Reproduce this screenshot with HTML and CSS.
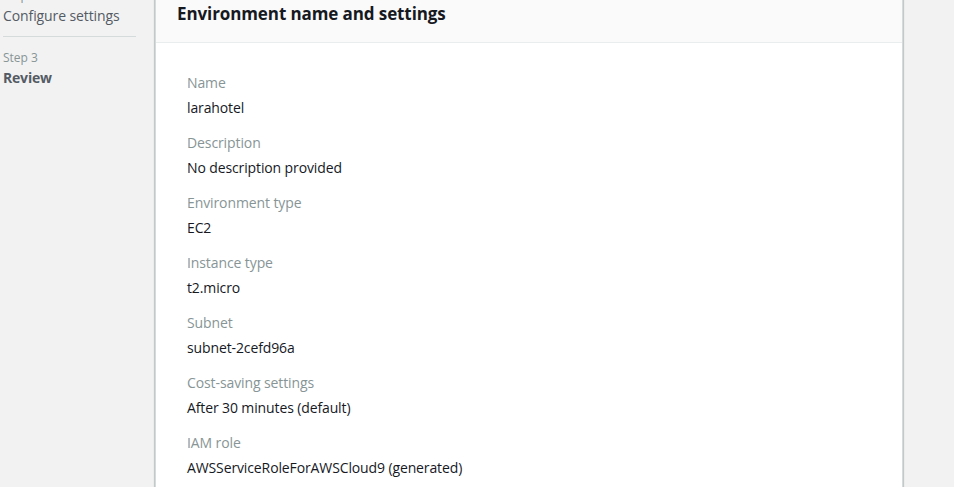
FILE: index.html
```html
<!DOCTYPE html>
<html lang="en">
<head>
<meta charset="utf-8">
<title>Review</title>
<link rel="stylesheet" href="styles.css">
</head>
<body>
<div class="page">
  <nav class="steps">
    <div class="step">
      <div class="step-num">Step 2</div>
      <div class="step-title">Configure settings</div>
    </div>
    <div class="step step-current">
      <div class="step-num">Step 3</div>
      <div class="step-title">Review</div>
    </div>
  </nav>
  <main class="content">
    <section class="card">
      <header class="card-header">
        <h2 class="card-title">Environment name and settings</h2>
      </header>
      <dl class="card-body">
        <div class="field"><dt>Name</dt><dd>larahotel</dd></div>
        <div class="field"><dt>Description</dt><dd>No description provided</dd></div>
        <div class="field"><dt>Environment type</dt><dd>EC2</dd></div>
        <div class="field"><dt>Instance type</dt><dd>t2.micro</dd></div>
        <div class="field"><dt>Subnet</dt><dd>subnet-2cefd96a</dd></div>
        <div class="field"><dt>Cost-saving settings</dt><dd>After 30 minutes (default)</dd></div>
        <div class="field"><dt>IAM role</dt><dd>AWSServiceRoleForAWSCloud9 (generated)</dd></div>
      </dl>
    </section>
  </main>
</div>
</body>
</html>
```
FILE: styles.css
```css
html, body {
  margin: 0;
  padding: 0;
  background: #f2f2f2;
  overflow: hidden;
}
body {
  font-family: "Open Sans", "Noto Sans", sans-serif;
  color: #16191f;
  height: 487px;
}
.page {
  display: flex;
  margin-top: -12px;
}
.steps {
  width: 133px;
  padding-left: 3px;
  margin-right: 19px;
  flex: none;
}
.step {
  padding-bottom: 10px;
  border-bottom: 1px solid #d5dbdb;
}
.step-current {
  border-bottom: none;
  padding-top: 13px;
}
.step-num {
  font-size: 12px;
  line-height: 16px;
  color: #879596;
}
.step-title {
  font-size: 14px;
  line-height: 20px;
  color: #545b64;
  margin-top: 2px;
  letter-spacing: -0.1px;
}
.step-current .step-title {
  font-weight: 700;
  color: #545b64;
  letter-spacing: -0.2px;
}
.content {
  width: 748px;
  flex: none;
}
.card {
  background: #fff;
  border-left: 1px solid #d5dbdb;
  border-right: 1px solid #d5dbdb;
  box-shadow: 0 1px 1px 0 rgba(0,28,36,0.3), 1px 1px 1px 0 rgba(0,28,36,0.15), -1px 1px 1px 0 rgba(0,28,36,0.15);
  min-height: 520px;
}
.card-header {
  background: #fafafa;
  border-bottom: 1px solid #eaeded;
  padding: 14px 21px 16px 21px;
}
.card-title {
  margin: 0;
  font-size: 17px;
  line-height: 24px;
  font-weight: 700;
  color: #16191f;
  letter-spacing: -0.1px;
}
.card-body {
  margin: 0;
  padding: 30px 31px 20px 31px;
  display: flex;
  flex-direction: column;
  gap: 15px;
}
.field dt {
  font-size: 14px;
  line-height: 20px;
  color: #879596;
  letter-spacing: -0.1px;
}
.field dd {
  margin: 5px 0 0 0;
  font-size: 14px;
  line-height: 20px;
  color: #16191f;
  letter-spacing: -0.12px;
}
```
